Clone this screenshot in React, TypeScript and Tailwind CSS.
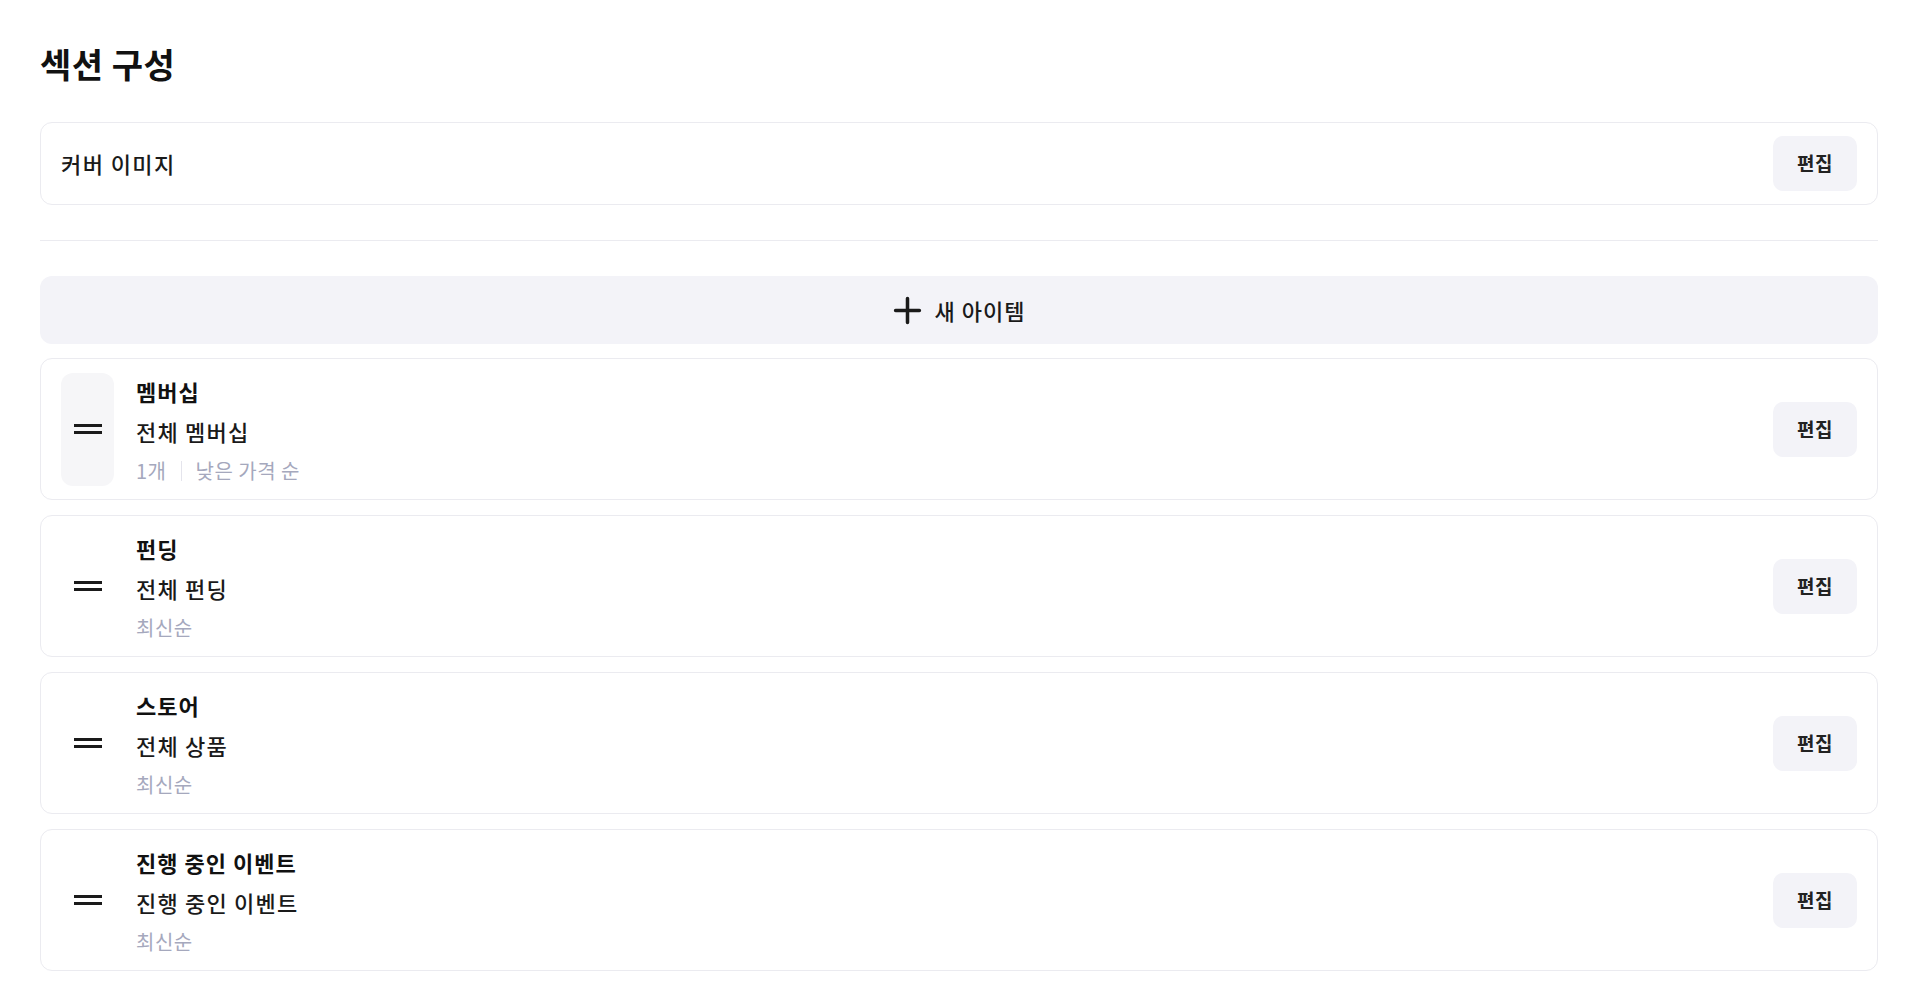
import React from "react";

type Section = {
  title: string;
  subtitle: string;
  meta: string[];
  active?: boolean;
};

const sections: Section[] = [
  { title: "멤버십", subtitle: "전체 멤버십", meta: ["1개", "낮은 가격 순"], active: true },
  { title: "펀딩", subtitle: "전체 펀딩", meta: ["최신순"] },
  { title: "스토어", subtitle: "전체 상품", meta: ["최신순"] },
  { title: "진행 중인 이벤트", subtitle: "진행 중인 이벤트", meta: ["최신순"] },
];

function EditButton() {
  return (
    <button className="flex h-[55px] w-[84px] shrink-0 items-center justify-center rounded-[10px] bg-[#f3f3f8] text-[19px] font-bold tracking-[0.5px] text-[#222]">
      편집
    </button>
  );
}

function DragHandle({ active }: { active?: boolean }) {
  return (
    <div
      className={
        active
          ? "flex h-[113px] w-[53px] shrink-0 items-center justify-center rounded-[12px] bg-[#f6f6f8]"
          : "flex h-[113px] w-[53px] shrink-0 items-center justify-center rounded-[12px]"
      }
    >
      <div className="flex flex-col gap-[4px]">
        <span className="block h-[3px] w-[28px] bg-[#1a1a1a]" />
        <span className="block h-[3px] w-[28px] bg-[#1a1a1a]" />
      </div>
    </div>
  );
}

export default function App() {
  return (
    <div className="min-h-screen bg-white px-10 pt-[41px] font-['Noto_Sans_CJK_KR','Noto_Sans',sans-serif] text-[#1a1a1a]">
      <h2 className="text-[34px] font-bold leading-[46px] tracking-[0.5px] text-[#111]">섹션 구성</h2>

      {/* Cover */}
      <div className="mt-[35px] flex items-center justify-between rounded-[12px] border border-[#ebebf0] py-[13px] pl-5 pr-5">
        <span className="text-[22px] font-medium tracking-[1.4px]">커버 이미지</span>
        <EditButton />
      </div>

      <div className="mt-[35px] h-px bg-[#ebebf0]" />

      <button className="mt-[35px] flex h-[68px] w-full items-center justify-center gap-[13px] rounded-[12px] bg-[#f3f3f8]">
        <svg width="29" height="29" viewBox="0 0 28 28" fill="none">
          <path d="M14 2.5v23M2.5 14h23" stroke="#1a1a1a" strokeWidth="3.4" strokeLinecap="round" />
        </svg>
        <span className="text-[22px] font-medium tracking-[1px]">새 아이템</span>
      </button>

      <div className="mt-[14px] flex flex-col gap-[15px]">
        {sections.map((s) => (
          <div
            key={s.title}
            className="flex h-[142px] items-center rounded-[12px] border border-[#ebebf0] px-5"
          >
            <DragHandle active={s.active} />
            <div className="ml-[22px] flex flex-1 flex-col self-stretch pt-[14px]">
              <span className="text-[22px] font-bold leading-[37px] tracking-[1px] text-[#111]">{s.title}</span>
              <span className="mt-[3px] text-[22px] font-medium leading-[37px] tracking-[1.2px]">{s.subtitle}</span>
              <div className="mt-[7px] flex items-center text-[20px] leading-[28px] tracking-[0.5px] text-[#a5a8bd]">
                {s.meta.map((m, i) => (
                  <React.Fragment key={m}>
                    {i > 0 && <span className="mx-[14px] h-[20px] w-px bg-[#e4e4ec]" />}
                    <span>{m}</span>
                  </React.Fragment>
                ))}
              </div>
            </div>
            <EditButton />
          </div>
        ))}
      </div>
    </div>
  );
}
